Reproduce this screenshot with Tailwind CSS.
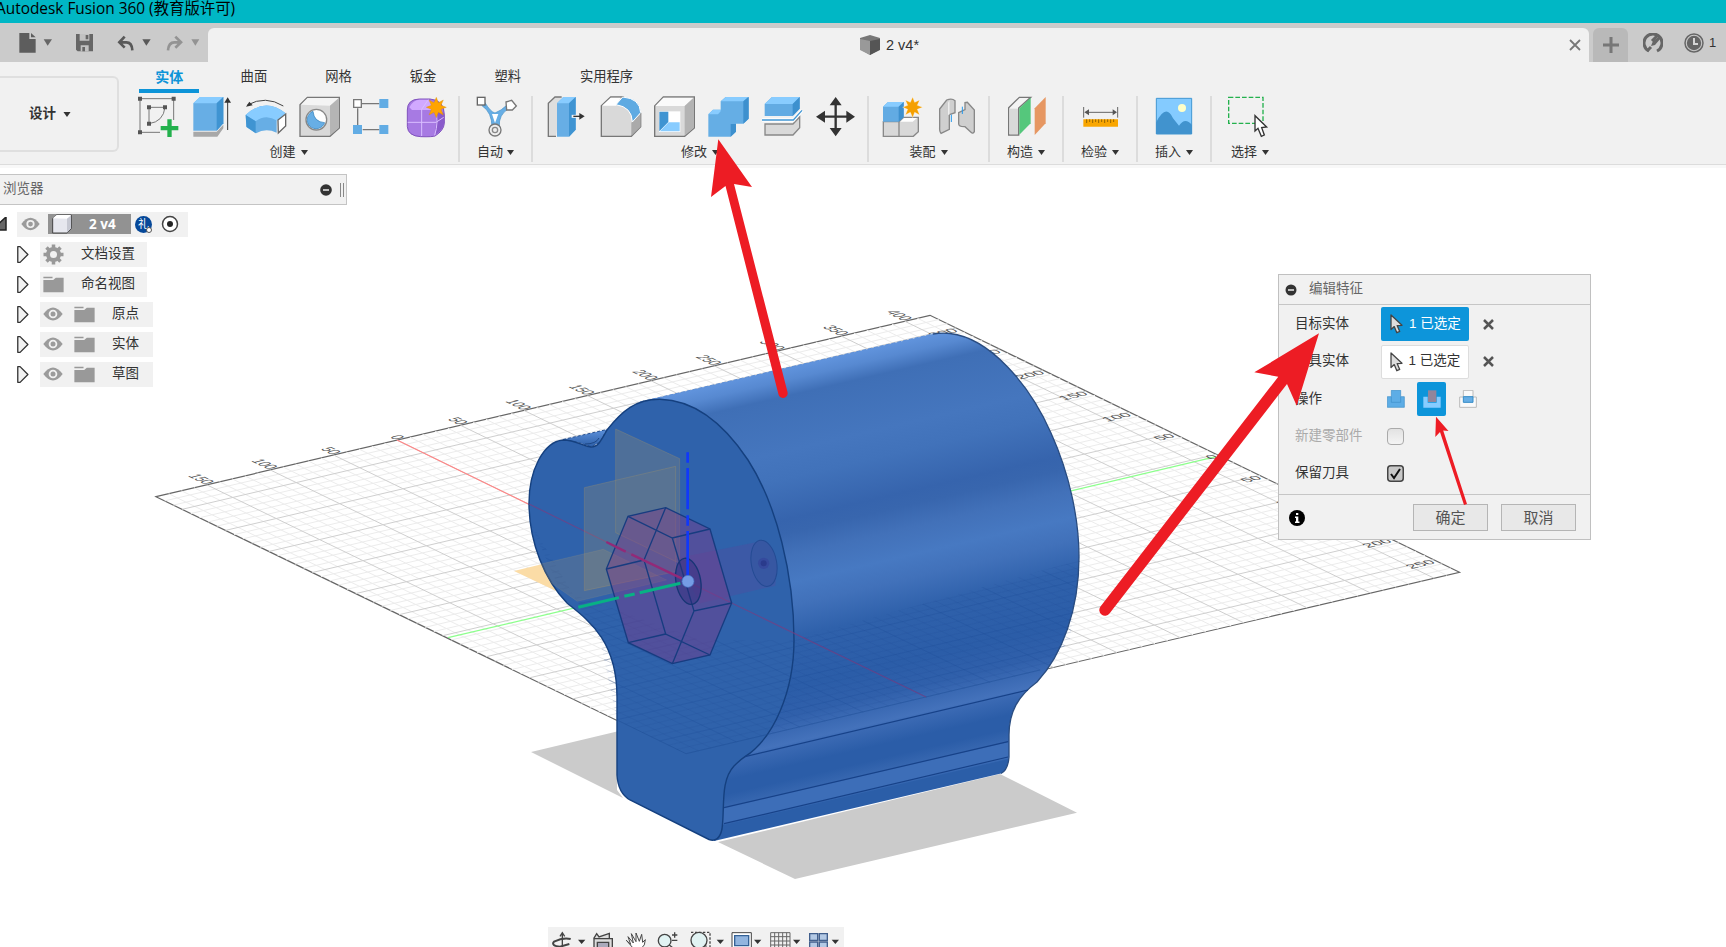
<!DOCTYPE html>
<html lang="zh-CN">
<head>
<meta charset="utf-8">
<title>Autodesk Fusion 360</title>
<script src="https://cdn.jsdelivr.net/npm/@tailwindcss/browser@4"></script>
</head>
<body class="relative flex h-[947px] w-[1726px] flex-col overflow-hidden bg-white font-['Liberation_Sans','Noto_Sans_CJK_SC',sans-serif] text-[#333]">

<svg class="hidden">
  <defs>
    <symbol id="eye" viewBox="0 0 60 42"><path d="M1 21Q30-18 59 21Q30 60 1 21Z" fill="#9b9b9b"/><circle cx="30" cy="21" r="13" fill="#f1f1f1"/><circle cx="30" cy="21" r="7.500" fill="#9b9b9b"/></symbol>
    <symbol id="folder" viewBox="0 0 62 52"><path d="M0 2H28V7H0Z M0 12H30L38 5H62V50H0Z" fill="#999"/></symbol>
    <symbol id="tri" viewBox="0 0 36 52"><path d="M2 2H9L33 26L9 50H2Z" fill="#f2f2f2" stroke="#333" stroke-width="4" stroke-linejoin="round"/></symbol>
    <symbol id="cursor" viewBox="0 0 40 62"><path d="M3 3V48L13 39L21 58L30 54L22 36L37 35Z" fill="#ddd" stroke="#444" stroke-width="4" stroke-linejoin="round"/></symbol>
    <symbol id="caret" viewBox="0 0 20 14"><path d="M0 0H20L10 14Z" fill="#333"/></symbol>
  </defs>
</svg>

<!-- Window title -->
<div class="flex h-[23px] shrink-0 items-center bg-[#00b7c5] pb-[5px] font-['Open_Sans','Noto_Sans_CJK_SC',sans-serif] text-[15.4px] leading-[18px] text-black"><span class="-ml-[4px] whitespace-nowrap">Autodesk Fusion 360 (教育版许可)</span></div>

<!-- Quick access and document tab -->
<div class="flex h-[39px] shrink-0 bg-[#cbcbcb]">
  <div class="flex w-[208px]">
    <svg class="h-[39px] w-[62px]" viewBox="0 69 186 117"><path d="M58 99H88V117H107V158H58Z M93 99L107 112H93Z" fill="#5d5d5d"/><path d="M131 118H156L143 137Z" fill="#666"/></svg>
    <svg class="h-[39px] w-[44px]" viewBox="186 69 132 117"><path d="M228 102H279V154H233L228 149Z" fill="#666"/><path d="M239 102H268V122H239Z M242 136H266V154H242Z" fill="#c2c2c2"/><path d="M257 105H265V118H257Z M247 141H255V154H247Z" fill="#666"/></svg>
    <svg class="h-[39px] w-[52px]" viewBox="318 69 156 117"><path d="M374 110L358 127L374 143 M360 127H379Q396 127 397 151" fill="none" stroke="#595959" stroke-width="8"/><path d="M427 118H452L439 137Z" fill="#595959"/></svg>
    <svg class="h-[39px] w-[50px]" viewBox="474 69 150 117"><path d="M526 110L543 127L526 143 M541 127H523Q506 127 504 151" fill="none" stroke="#939393" stroke-width="8"/><path d="M574 118H598L586 137Z" fill="#939393"/></svg>
  </div>
  <div class="mt-[5px] flex flex-1 items-center rounded-t-md bg-[#f1f1f1]">
    <div class="flex flex-1 items-center justify-center gap-[6px] pl-[2px] text-[14.5px]">
      <svg class="h-5 w-5" viewBox="0 0 20 20"><path d="M0 3L10 0L20 3V14L10 20L0 14Z" fill="#777"/><path d="M0 4L10 6V20L0 15Z" fill="#999"/><path d="M10 6L20 4V15L10 20Z" fill="#555"/></svg><span class="pt-[1px]">2 v4*</span>
    </div>
    <svg class="mr-[8px] h-[12px] w-[12px]" viewBox="0 0 12 12"><path d="M1 1L11 11M11 1L1 11" stroke="#777" stroke-width="1.800"/></svg>
  </div>
  <div class="mt-[5px] ml-[4px] flex w-[35px] items-center justify-center rounded-t-md bg-[#b9b9b9]"><svg class="h-4 w-4" viewBox="0 0 16 16"><path d="M8 0V16M0 8H16" stroke="#777" stroke-width="3"/></svg></div>
  <div class="flex w-[98px] items-center pl-[15px]">
    <svg class="h-5 w-5" viewBox="0 0 20 20"><path d="M6 18A9 9 0 1 1 14 18" fill="none" stroke="#666" stroke-width="3"/><path d="M17 3L10 8L8 13L12 12L18 5Z" fill="#666"/><path d="M4 18L8 14M15 2L9 8" stroke="#666" stroke-width="3"/></svg>
    <svg class="ml-[21px] h-5 w-5" viewBox="0 0 20 20"><circle cx="10" cy="10" r="9" fill="none" stroke="#666" stroke-width="1.500"/><circle cx="10" cy="10" r="7.200" fill="#666"/><path d="M10 5V11H14" stroke="#d5d5d5" stroke-width="2" fill="none"/></svg>
    <span class="ml-[5px] text-[13px]">1</span>
  </div>
</div>

<!-- Ribbon -->
<div class="flex h-[106px] shrink-0 border-b-[3px] border-[#f8f8f8] bg-[#f1f1f1] shadow-[inset_0_-1px_0_#dcdcdc]">
  <div class="mt-[14px] flex h-[76px] w-[119px] items-center gap-[7px] rounded-r-md border-2 border-l-0 border-[#dfdfdf] pl-[29px] text-[13.5px] font-bold">设计<svg class="h-[5px] w-[8px]"><use href="#caret"/></svg></div>
  <div class="flex flex-col">
    <div class="flex h-[34px] items-end pl-[8px] text-[13.3px]">
      <div class="flex h-[29px] w-[84.6px] justify-center font-bold text-[#0d94d8]"><span class="flex h-[26px] w-[60px] justify-center border-b-4 border-[#0d94d8] text-[14px]">实体</span></div>
      <div class="h-[29px] w-[84.6px] text-center">曲面</div>
      <div class="h-[29px] w-[84.6px] text-center">网格</div>
      <div class="h-[29px] w-[84.6px] text-center">钣金</div>
      <div class="h-[29px] w-[84.6px] text-center">塑料</div>
      <div class="h-[29px] w-[113px] text-center">实用程序</div>
    </div>
    <div class="flex h-[66px] text-[13px]">
      <div class="flex w-[341px] flex-col border-r-2 border-[#dcdcdc]">
        <div class="-mt-[1px] flex pl-[11px]">
          <svg class="h-[44px] w-[54px]" viewBox="390 285 162 132"><path d="M420 296H521V360M420 296V397H480" fill="none" stroke="#777" stroke-width="3"/><path d="M447 371V322H495Q490 365 447 371" fill="none" stroke="#777" stroke-width="3"/><path d="M414 290h12v12h-12zM515 290h12v12h-12zM414 391h12v12h-12zM441 316h12v12h-12zM489 316h12v12h-12zM441 365h12v12h-12z" fill="#555"/><path d="M502 358H515V378H535V391H515V411H502V391H482V378H502Z" fill="#23b14d"/></svg>
          <svg class="h-[44px] w-[54px]" viewBox="552 285 162 132"><path d="M580 395L650 395L670 374V385L652 410H580Z" fill="#a8a8a8"/><path d="M580 310L600 291H670V370L650 392H580Z" fill="#67aee5"/><path d="M580 310L600 291H670L650 310Z" fill="#88ccff"/><path d="M650 310L670 291V370L650 392Z" fill="#3f94d2"/><path d="M683 390V300" stroke="#333" stroke-width="3"/><path d="M673 308L683 292L693 308Z" fill="#333"/></svg>
          <svg class="h-[44px] w-[54px]" viewBox="714 285 162 132"><path d="M737 345Q797 290 857 340L830 360V398Q797 383 768 400L740 382Z" fill="#67aee5"/><path d="M737 345Q797 290 857 340L832 362Q797 340 767 364Z" fill="#88ccff"/><path d="M737 345L767 364V400L739 380Z" fill="#3f94d2"/><path d="M834 360L857 342V378L835 399Z" fill="#fff" stroke="#666" stroke-width="4"/><path d="M742 315Q797 285 850 318" fill="none" stroke="#444" stroke-width="3"/><path d="M738 320L748 305L758 316Z" fill="#333"/></svg>
          <svg class="h-[44px] w-[54px]" viewBox="876 285 162 132"><path d="M900 314L922 292H1018V384L990 409H900Z" fill="#d9d9d9" stroke="#777" stroke-width="4"/><path d="M903 314L923 294H1016L990 317Z" fill="#f4f4f4"/><path d="M990 317L1016 295V384L990 406Z" fill="#b5b5b5"/><circle cx="949" cy="359" r="31" fill="#fff" stroke="#888" stroke-width="4"/><path d="M939 334A27 27 0 1 0 974 368Q942 366 939 334Z" fill="#67aee5" stroke="#2d7bb5" stroke-width="2"/></svg>
          <svg class="h-[44px] w-[54px]" viewBox="1038 285 162 132"><path d="M1086 311H1138M1073 325V376M1088 389H1138" stroke="#777" stroke-width="4"/><path d="M1061 299h23v23h-23z" fill="#fff" stroke="#777" stroke-width="4"/><path d="M1138 297h27v27h-27zM1059 375h27v27h-27zM1138 375h27v27h-27z" fill="#62ace4"/></svg>
          <svg class="h-[44px] w-[54px]" viewBox="1200 285 162 132"><path d="M1222 330Q1222 298 1258 297H1290Q1333 300 1333 345V370Q1331 392 1305 408Q1298 411 1262 410Q1224 408 1222 380Z" fill="#a77ae3" stroke="#8052bd" stroke-width="3"/><path d="M1310 330L1332 340V370Q1330 390 1306 404Z" fill="#8a5bcb"/><path d="M1228 322Q1240 298 1260 299H1286L1306 325L1300 330H1236Z" fill="#d1a9ff"/><path d="M1223 367H1308L1331 352M1265 328V408M1306 328Q1317 365 1304 406M1265 328L1285 299" stroke="#dabfff" stroke-width="3" fill="none"/><path d="M1309 292L1315 308L1330 300L1323 316L1339 322L1323 328L1330 345L1315 337L1309 353L1302 337L1287 345L1294 328L1279 322L1294 316L1287 300L1302 308Z" fill="#ffa400" stroke="#d98900" stroke-width="1"/></svg>
        </div>
        <div class="flex h-[23px] items-center justify-center gap-[5px] pt-[3px]">创建<svg class="h-[5px] w-[7px]"><use href="#caret"/></svg></div>
      </div>
      <div class="flex w-[73px] flex-col border-r-2 border-[#dcdcdc]">
        <div class="-mt-[1px] flex pl-[9px]"><svg class="h-[44px] w-[54px]" viewBox="57 105 162 132"><path d="M105 128Q122 156 135 159Q155 151 170 136L177 145Q145 164 148 200L126 202Q126 157 96 137Z" fill="#67aee5" stroke="#468fc5" stroke-width="2"/><path d="M126 162H145L135 189Z" fill="#fff"/><rect x="82" y="112" width="23" height="23" fill="#fff" stroke="#666" stroke-width="4"/><path d="M168 126L185 121L199 138L187 150H170Z" fill="#fff" stroke="#777" stroke-width="4"/><circle cx="135" cy="210" r="18" fill="#eee" stroke="#777" stroke-width="4"/><circle cx="135" cy="210" r="8" fill="none" stroke="#888" stroke-width="4"/></svg></div>
        <div class="flex h-[23px] items-center justify-center gap-[4px] pt-[3px]">自动<svg class="h-[5px] w-[7px]"><use href="#caret"/></svg></div>
      </div>
      <div class="flex w-[336px] flex-col border-r-2 border-[#dcdcdc]">
        <div class="-mt-[1px] flex pl-[7px]">
          <svg class="h-[44px] w-[54px]" viewBox="270 105 162 132"><path d="M318 229H295V130L315 111H335" fill="#dedede" stroke="#777" stroke-width="4"/><path d="M321 130L340 111H377V209L357 230H321Z" fill="#67aee5"/><path d="M321 130L340 111H377L357 130Z" fill="#88ccff"/><path d="M357 130L377 111V209L357 230Z" fill="#3f94d2"/><path d="M365 169H392" stroke="#f5f5f5" stroke-width="9"/><path d="M370 169H392" stroke="#333" stroke-width="4"/><path d="M388 159L404 169L388 179Z" fill="#333"/></svg>
          <svg class="h-[44px] w-[54px]" viewBox="432 105 162 132"><path d="M454 229V137L482 111H520L572 160V200L544 229Z" fill="#d9d9d9" stroke="#777" stroke-width="4"/><path d="M456 137L482 113H512L498 137Z" fill="#fff"/><path d="M544 188L572 161V200L544 227Z" fill="#aaa"/><path d="M498 134L518 111Q570 115 572 158L547 186Q546 141 498 134Z" fill="#5eaae2" stroke="#fff" stroke-width="3"/></svg>
          <svg class="h-[44px] w-[54px]" viewBox="594 105 162 132"><path d="M614 138L640 111H733V204L704 229H614Z" fill="#d9d9d9" stroke="#777" stroke-width="4"/><path d="M616 138L640 113H731L704 138Z" fill="#fafafa"/><path d="M704 138L731 113V204L704 227Z" fill="#b3b3b3"/><path d="M627 154H691V216H627Z" fill="#fff"/><path d="M628 155L655 155V186L628 214Z" fill="#3f94d2"/><path d="M656 187H689V214H630Z" fill="#88ccff"/></svg>
          <svg class="h-[44px] w-[54px]" viewBox="756 105 162 132"><path d="M775 163L789 149H812V124L827 111H896V176L880 191H858V215L842 230H775Z" fill="#65aee5"/><path d="M775 163L789 149H812V154L804 163Z M813 124L827 111H894L880 124Z" fill="#88ccff"/><path d="M880 124L896 111V176L880 191Z M842 192H858V215L842 230Z" fill="#3d90ce"/></svg>
          <svg class="h-[44px] w-[54px]" viewBox="918 105 162 132"><path d="M944 132L966 111H1049V146L1028 168H944Z" fill="#62abe3"/><path d="M944 132L966 111H1049L1028 132Z" fill="#88ccff"/><path d="M1028 132L1049 111V146L1028 168Z" fill="#3d90ce"/><path d="M945 192H1029L1049 171V203L1029 225H945Z" fill="#d9d9d9" stroke="#888" stroke-width="4"/><path d="M936 180H1030L1056 151" fill="none" stroke="#fff" stroke-width="10"/><path d="M936 180H1030L1056 151" fill="none" stroke="#4297d4" stroke-width="4"/></svg>
          <svg class="h-[44px] w-[54px]" viewBox="1080 105 162 132"><path d="M1157 130V210M1118 170H1196" stroke="#333" stroke-width="7"/><path d="M1157 111L1175 136H1139ZM1157 229L1175 204H1139ZM1098 170L1125 152V188ZM1215 170L1189 152V188Z" fill="#333"/></svg>
        </div>
        <div class="flex h-[23px] items-center justify-center gap-[5px] pt-[3px]">修改<svg class="h-[5px] w-[7px]"><use href="#caret"/></svg></div>
      </div>
      <div class="flex w-[121px] flex-col border-r-2 border-[#dcdcdc]">
        <div class="-mt-[1px] flex pl-[7px]">
          <svg class="h-[44px] w-[54px]" viewBox="18 105 162 132"><path d="M40 185H87L100 172H145V215L130 229H40Z" fill="#d8d8d8" stroke="#888" stroke-width="4"/><path d="M87 185V229" stroke="#888" stroke-width="4"/><path d="M91 185L103 174H141L128 185Z" fill="#fff"/><path d="M39 140L54 126H101V172L86 185H39Z" fill="#62abe3"/><path d="M39 140L54 126H101L86 140Z" fill="#88ccff"/><path d="M86 140L101 126V172L86 185Z" fill="#3d90ce"/><path d="M128 111L134 127L149 120L142 136L158 142L142 148L149 165L134 157L128 173L121 157L106 165L113 148L98 142L113 136L106 120L121 127Z" fill="#f5a000" stroke="#fff" stroke-width="1"/></svg>
          <svg class="h-[44px] w-[54px]" viewBox="180 105 162 132"><path d="M209 147L230 120Q246 114 255 122V158L238 164V208L213 220Q208 215 209 200Z" fill="#cfcfcf" stroke="#888" stroke-width="4"/><path d="M235 128L238 120V164L235 165Z" fill="#fff"/><path d="M266 158L285 149V128L292 127L313 150V215Q309 223 303 217L285 200Q267 201 266 192Z" fill="#cfcfcf" stroke="#888" stroke-width="4"/><path d="M244 164V186M277 140V162" stroke="#2598ec" stroke-width="3"/></svg>
        </div>
        <div class="flex h-[23px] items-center justify-center gap-[5px] pt-[3px]">装配<svg class="h-[5px] w-[7px]"><use href="#caret"/></svg></div>
      </div>
      <div class="flex w-[74px] flex-col border-r-2 border-[#dcdcdc]">
        <div class="-mt-[1px] flex pl-[9px]"><svg class="h-[44px] w-[54px]" viewBox="387 105 162 132"><path d="M416 143L448 112H482L446 144V225H416Z" fill="#f4f4f4" stroke="#777" stroke-width="4"/><path d="M418 146H444V223H418Z" fill="#d9d9d9"/><path d="M448 145L482 113V190L448 224Z" fill="#55c77c"/><path d="M494 145L527 111V190L494 225Z" fill="#e69762"/></svg></div>
        <div class="flex h-[23px] items-center justify-center gap-[5px] pt-[3px]">构造<svg class="h-[5px] w-[7px]"><use href="#caret"/></svg></div>
      </div>
      <div class="flex w-[74px] flex-col border-r-2 border-[#dcdcdc]">
        <div class="-mt-[1px] flex pl-[9px]"><svg class="h-[44px] w-[54px]" viewBox="609 105 162 132"><path d="M641 141V173M743 141V173M650 157H735" stroke="#666" stroke-width="3"/><path d="M643 157L657 148V166ZM741 157L728 148V166Z" fill="#555"/><path d="M640 178H744V200H640Z" fill="#f9a600"/><path d="M650 178V189M659 178V186M668 178V189M677 178V186M686 178V189M695 178V186M704 178V189M713 178V186M722 178V189M731 178V186" stroke="#956400" stroke-width="3"/></svg></div>
        <div class="flex h-[23px] items-center justify-center gap-[5px] pt-[3px]">检验<svg class="h-[5px] w-[7px]"><use href="#caret"/></svg></div>
      </div>
      <div class="flex w-[74px] flex-col border-r-2 border-[#dcdcdc]">
        <div class="-mt-[1px] flex pl-[9px]"><svg class="h-[44px] w-[54px]" viewBox="831 105 162 132"><path d="M859 115H965V222H859Z" fill="#84cbff" stroke="#4197d2" stroke-width="3"/><circle cx="936" cy="144" r="12" fill="#ffffc9"/><path d="M858 188Q888 129 909 175L927 197Q945 170 966 195V222H858Z" fill="#4193ce"/></svg></div>
        <div class="flex h-[23px] items-center justify-center gap-[5px] pt-[3px]">插入<svg class="h-[5px] w-[7px]"><use href="#caret"/></svg></div>
      </div>
      <div class="flex w-[76px] flex-col">
        <div class="-mt-[1px] flex pl-[8px]"><svg class="h-[44px] w-[54px]" viewBox="1050 105 162 132"><path d="M1076 112H1179V190H1076Z" fill="none" stroke="#23b14d" stroke-width="4" stroke-dasharray="14 6"/><path d="M1155 167V213L1164 205L1174 229L1183 225L1175 203L1190 201Z" fill="#fff" stroke="#333" stroke-width="4"/></svg></div>
        <div class="flex h-[23px] items-center justify-center gap-[5px] pt-[3px]">选择<svg class="h-[5px] w-[7px]"><use href="#caret"/></svg></div>
      </div>
    </div>
  </div>
</div>

<!-- Modelling viewport -->
<main class="relative min-h-0 flex-1">
  <svg class="absolute inset-0 h-[779px] w-[1726px]" viewBox="0 168 1726 779">
    <defs>
      <linearGradient id="side" gradientUnits="userSpaceOnUse" x1="660" y1="398" x2="760.500" y2="832">
        <stop offset="0" stop-color="#6093dc"/><stop offset=".025" stop-color="#5789d1"/><stop offset=".06" stop-color="#3f6fb6"/><stop offset=".18" stop-color="#4576be"/><stop offset=".24" stop-color="#4172ba"/><stop offset=".33" stop-color="#3664ad"/><stop offset=".36" stop-color="#3866ae"/><stop offset=".41" stop-color="#4271b9"/><stop offset=".47" stop-color="#4779c2"/><stop offset=".52" stop-color="#4171ba"/><stop offset=".59" stop-color="#2f61ab"/><stop offset=".7" stop-color="#2b5da8"/><stop offset=".76" stop-color="#3060ab"/><stop offset=".82" stop-color="#4472bb"/><stop offset=".83" stop-color="#3a69b3"/><stop offset=".87" stop-color="#2b5da8"/><stop offset=".9" stop-color="#2b5da8"/><stop offset=".928" stop-color="#3767b0"/><stop offset=".93" stop-color="#3d6eb8"/><stop offset=".963" stop-color="#3d6eb8"/><stop offset=".967" stop-color="#2b5ea8"/><stop offset="1" stop-color="#2b5ea8"/>
      </linearGradient>
      <linearGradient id="bump" x1="0" y1="0" x2="0" y2="1"><stop offset="0" stop-color="#5d91db"/><stop offset="1" stop-color="#2d5fa8"/></linearGradient>
      <clipPath id="low"><path d="M529 520L560 590L700 640L794 640L1080 560L1070 640L1030 687L745 757L690 757L617 720L600 640Z"/></clipPath>
    </defs>
    <path d="M156 496.700L930 315.300L1459.500 572.300L685.500 753.700Z" fill="#fff" stroke="#666" stroke-width="1.200"/>
    <path id="minor" fill="none" stroke="#ececec" stroke-width="1"/>
    <path id="major" fill="none" stroke="#cfcfcf" stroke-width="1"/>
    <path d="M397 440L684 580" stroke="#ff8585" stroke-width="1.200"/>
    <path d="M448 637.700L1216 456.700" stroke="#8dff8d" stroke-width="1.300"/>
    <g id="labels" class="font-['Liberation_Sans',sans-serif]" font-size="12" fill="#555"></g>

    <path d="M531 752L617 731.500V790L623 798ZM718 842L1000 774L1077 812.700L795 879Z" fill="#cbcbcb"/>
    <path d="M514 571L603 549.300L667 580L577 601Z" fill="#fbdca6"/>

    <path d="M563 439.500L607 429.500L600 442L591 447L580 443Z" fill="url(#bump)" stroke="#264f8f" stroke-width="1" stroke-dasharray="3 2"/>
    <path d="M648 400L933 334Q942 332.500 950 333.500C990 338 1030 385 1051 433C1070 475 1079 520 1079 557C1079 610 1062 655 1037 682C1018 696 1009 712 1009 735V757Q1008 770 1001 773.500L714 841Z" fill="url(#side)"/>
    <path d="M933 334Q942 332.500 950 333.500C990 338 1030 385 1051 433C1070 475 1079 520 1079 557C1079 610 1062 655 1037 682C1018 696 1009 712 1009 735V757Q1008 770 1001 773.500" fill="none" stroke="#294c80" stroke-width="1.300"/>
    <path d="M640 402L933 334" stroke="#5b8ed8" stroke-width="1" stroke-dasharray="4 2"/>
    <path d="M660 399.300C636 399 622 411 607 430C601 441 598 447 591 447C581 446 577 440 563 440C543 442 529 471 529 503C529 543 545 580 567 603C588 620 617 640 617 697V775Q618 793 630 800L709 839.500Q719 843 722 829C725 808 720 781 734 766Q740 760 745 756.700C774 738 794 691 794 640C794 575 777 505 748 460C718 415 688 400 660 399.300Z" fill="#2f62ab" stroke="#15407f" stroke-width="1.400"/>
    <path d="M585 444Q596 444 599 438" fill="none" stroke="#1d4887" stroke-width="1"/>
    <path d="M745 756.700L1028 690M724 807.700L1008 741.700M724 823.700L1008 757" stroke="#174289" stroke-width="1.200"/>

    <g clip-path="url(#low)">
      <path id="minorLow" fill="none" stroke="#1d4d96" stroke-opacity=".12" stroke-width="1"/>
      <path id="majorLow" fill="none" stroke="#1d4d96" stroke-opacity=".28" stroke-width="1"/>
    </g>
    <path d="M617 720L686 753.700L1040 670" fill="none" stroke="#1d4d96" stroke-opacity=".5"/>
    <path d="M529 504L684 580L926 697" fill="none" stroke="#7c3c80" stroke-opacity=".65" stroke-width="1.200"/>

    <!-- Origin planes, tool body and axes -->
    <g transform="translate(500 380) scale(.33333)">
      <path d="M123 552L310 508L500 600L232 664L155 610Z" fill="#c9a35d" fill-opacity=".18" stroke="#a79c79" stroke-opacity=".25" stroke-width="2"/>
      <path d="M347 147L539 236V550L347 458ZM253 323L527 259V575L253 632Z" fill="#b39a62" fill-opacity=".24" stroke="#b39a62" stroke-opacity=".28" stroke-width="3"/>
      <path d="M347 302L527 259V545L347 458Z" fill="#b39a62" fill-opacity=".1"/>
      <path d="M530 535L790 482Q835 530 826 617L600 670Z" fill="#6c3b94" fill-opacity=".22"/>
      <path d="M497 383L630 447L695 669L630 825L517 851L385 788L319 567L384 409Z" fill="#7e3989" fill-opacity=".44" stroke="#173c80" stroke-width="4"/>
      <path d="M384 409L517 474L630 447M497 383L432 540L497 762L630 825M319 567L432 540M385 788L497 762M517 474L582 693L695 669M582 693L517 851" fill="none" stroke="#173c80" stroke-width="4"/>
      <ellipse cx="565" cy="604" rx="37" ry="70" transform="rotate(-10 565 604)" fill="#2c2879" fill-opacity=".4" stroke="#173575" stroke-width="4"/>
      <ellipse cx="792" cy="550" rx="38" ry="70" transform="rotate(-10 792 550)" fill="#3757a2" stroke="#244b93" stroke-width="3"/>
      <circle cx="791" cy="550" r="17" fill="#354a9d"/><circle cx="791" cy="550" r="9" fill="#2a3b8c"/>
      <path d="M319 486L377 515M394 523L545 595" stroke="#922a78" stroke-width="7"/>
      <path d="M541 610L419 638M404 642L373 649M357 653L235 682" stroke="#08b184" stroke-width="9"/>
      <path d="M563 217V248M563 264V388M563 406V437M563 453V590" stroke="#1038fa" stroke-width="8"/>
      <circle cx="564" cy="604" r="18" fill="#759ce5" stroke="#4772c3" stroke-width="2"/>
    </g>
  </svg>

  <!-- Browser panel -->
  <section class="relative flex flex-col items-start pt-[6px]">
    <header class="flex h-[31px] w-[347px] items-center border-[1.5px] border-l-0 border-[#c4c4c4] bg-[#f1f1f1] pl-[3px] text-[13.5px] text-[#666]">浏览器
      <svg class="ml-auto h-[12px] w-[12px]" viewBox="0 0 12 12"><circle cx="6" cy="6" r="5.800" fill="#333"/><path d="M3 6H9" stroke="#eee" stroke-width="1.500"/></svg>
      <span class="mr-[2px] ml-[8px] h-[14px] w-[4px] border-x border-[#888]"></span>
    </header>
    <div class="mt-[6.5px] flex h-[25px] items-center">
      <svg class="h-[15px] w-[17px]" viewBox="0 0 17 15"><path d="M6 0V13H-8Z" fill="#666" stroke="#222" stroke-width="1.500"/></svg>
      <div class="flex h-[25px] w-[171px] items-center bg-[#f1f1f1] pl-[4px]">
        <svg class="h-[14px] w-[19px]"><use href="#eye"/></svg>
        <div class="ml-[8px] flex h-[20px] w-[83px] items-center bg-[#929292] font-['Open_Sans',sans-serif] text-[13.5px] font-bold text-white"><svg class="ml-[3px] h-[20px] w-[22px]" viewBox="0 0 66 60"><path d="M5 13L17 3H61V44L48 57H5Z" fill="#e6e7ee" stroke="#444" stroke-width="3"/><path d="M5 13L17 3H61L48 14Z" fill="#fff"/><path d="M48 14L60 5V43L48 56Z" fill="#c6c8d2"/></svg><span class="ml-[16px]">2 v4</span></div>
        <div class="relative ml-[4px] flex h-[17px] w-[17px] items-center justify-center rounded-full bg-[#064899] text-[11px] text-white">礼<span class="absolute right-0 bottom-0 h-[6px] w-[6px] rounded-sm border border-[#555] bg-white"></span></div>
        <svg class="ml-[9px] h-[18px] w-[18px]" viewBox="0 0 18 18"><circle cx="9" cy="9" r="7.500" fill="#fff" stroke="#444" stroke-width="1.500"/><circle cx="9" cy="9" r="3" fill="#222"/></svg>
      </div>
    </div>
    <div class="mt-[5px] flex flex-col gap-[5px] pl-[17px] text-[13.500px]">
      <div class="flex h-[25px] items-center gap-[11px]"><svg class="h-[17px] w-[12px]"><use href="#tri"/></svg><div class="flex h-[25px] w-[107px] items-center bg-[#f1f1f1] pl-[3px]"><svg class="h-[21px] w-[21px]" viewBox="-10.500 -10.500 21 21"><circle r="5.500" fill="none" stroke="#999" stroke-width="4"/><path d="M0-10V-6M0 10V6M-10 0H-6M10 0H6M-7-7L-4.500-4.500M7 7L4.500 4.500M7-7L4.500-4.500M-7 7L-4.500 4.500" stroke="#999" stroke-width="3.500"/></svg><span class="ml-[17px] pt-[1px]">文档设置</span></div></div>
      <div class="flex h-[25px] items-center gap-[11px]"><svg class="h-[17px] w-[12px]"><use href="#tri"/></svg><div class="flex h-[25px] w-[107px] items-center bg-[#f1f1f1] pl-[3px]"><svg class="h-[17px] w-[21px]"><use href="#folder"/></svg><span class="ml-[17px] pt-[1px]">命名视图</span></div></div>
      <div class="flex h-[25px] items-center gap-[11px]"><svg class="h-[17px] w-[12px]"><use href="#tri"/></svg><div class="flex h-[25px] w-[113px] items-center bg-[#f1f1f1] pl-[3px]"><svg class="h-[14px] w-[20px]"><use href="#eye"/></svg><svg class="ml-[11px] h-[17px] w-[21px]"><use href="#folder"/></svg><span class="ml-[17px] pt-[1px]">原点</span></div></div>
      <div class="flex h-[25px] items-center gap-[11px]"><svg class="h-[17px] w-[12px]"><use href="#tri"/></svg><div class="flex h-[25px] w-[113px] items-center bg-[#f1f1f1] pl-[3px]"><svg class="h-[14px] w-[20px]"><use href="#eye"/></svg><svg class="ml-[11px] h-[17px] w-[21px]"><use href="#folder"/></svg><span class="ml-[17px] pt-[1px]">实体</span></div></div>
      <div class="flex h-[25px] items-center gap-[11px]"><svg class="h-[17px] w-[12px]"><use href="#tri"/></svg><div class="flex h-[25px] w-[113px] items-center bg-[#f1f1f1] pl-[3px]"><svg class="h-[14px] w-[20px]"><use href="#eye"/></svg><svg class="ml-[11px] h-[17px] w-[21px]"><use href="#folder"/></svg><span class="ml-[17px] pt-[1px]">草图</span></div></div>
    </div>
  </section>

  <!-- Edit feature dialog -->
  <section class="absolute top-[106px] left-[1278px] flex h-[266px] w-[313px] flex-col border border-[#c0c0c0] bg-[#f1f1f1] text-[13.500px]">
    <header class="flex h-[30px] items-center gap-[12px] border-b border-[#c6c6c6] pl-[6px] text-[#666]"><svg class="h-[12px] w-[12px]" viewBox="0 0 12 12"><circle cx="6" cy="6" r="5.500" fill="#333"/><path d="M3 6H9" stroke="#eee" stroke-width="1.500"/></svg>编辑特征</header>
    <div class="flex h-[189px] flex-col pl-[16px]">
      <div class="flex h-[38px] items-center"><span class="w-[86px]">目标实体</span><div class="flex h-[34px] w-[88px] items-center gap-[6px] rounded-xs bg-[#0d95da] pl-[9px] text-white"><svg class="h-[20px] w-[13px]"><use href="#cursor"/></svg><span>1 已选定</span></div><svg class="ml-[14px] h-[11px] w-[11px]" viewBox="0 0 11 11"><path d="M1 1L10 10M10 1L1 10" stroke="#555" stroke-width="2.500"/></svg></div>
      <div class="flex h-[37px] items-center"><span class="w-[86px]">刀具实体</span><div class="flex h-[34px] w-[88px] items-center gap-[6px] rounded-xs border-[1.500px] border-[#ddd] bg-white pl-[7.500px]"><svg class="h-[20px] w-[13px]"><use href="#cursor"/></svg><span>1 已选定</span></div><svg class="ml-[14px] h-[11px] w-[11px]" viewBox="0 0 11 11"><path d="M1 1L10 10M10 1L1 10" stroke="#555" stroke-width="2.500"/></svg></div>
      <div class="flex h-[38px] items-center"><span class="w-[92px]">操作</span>
        <svg class="h-[18px] w-[18px]" viewBox="0 0 54 54"><path d="M13 1H41V20H52V52H1V20H13Z" fill="#5dade6" stroke="#3c8ec9" stroke-width="2"/><path d="M13 20V37H41V20" fill="none" stroke="#3c8ec9" stroke-width="2"/></svg>
        <div class="ml-[12px] flex h-[34px] w-[29px] items-center justify-center rounded-xs bg-[#0d95da]"><svg class="h-[18px] w-[18px]" viewBox="0 0 54 54"><path d="M1 20H14V38H41V20H53V53H1Z" fill="#86ccff"/><path d="M15 1H40V36H15Z" fill="#92859b"/></svg></div>
        <svg class="ml-[13px] h-[18px] w-[18px]" viewBox="0 0 54 54"><path d="M13 1H42V21H52V52H2V21H13Z" fill="#fafafa" stroke="#bbb" stroke-width="3"/><path d="M13 20H42V37H13Z" fill="#67aee5" stroke="#358cc7" stroke-width="3"/></svg>
      </div>
      <div class="flex h-[37px] items-center text-[#aaa]"><span class="w-[92px]">新建零部件</span><span class="h-[17px] w-[17px] rounded border border-[#aaa] bg-gradient-to-b from-[#e2e2e2] to-[#f4f4f4]"></span></div>
      <div class="flex h-[37px] items-center"><span class="w-[92px]">保留刀具</span><svg class="h-[17px] w-[17px]" viewBox="0 0 17 17"><rect x=".75" y=".75" width="15.500" height="15.500" rx="3" fill="#c8c8c8" stroke="#444" stroke-width="1.500"/><path d="M4 9L7 13L13 4" fill="none" stroke="#111" stroke-width="2"/></svg></div>
    </div>
    <footer class="flex flex-1 items-center border-t border-[#c6c6c6] pt-[1px] pl-[10px] text-[15px] text-[#555]"><svg class="h-[16px] w-[16px]" viewBox="0 0 16 16"><circle cx="8" cy="8" r="8" fill="#000"/><path d="M6 6.500H9.300V11.500H10.500V13H6V11.500H7V8H6ZM7 3H9.300V5H7Z" fill="#fff"/></svg>
      <button class="ml-[108px] h-[27px] w-[75px] border border-[#b5b5b5] bg-[#e8e8e8] pt-[1px]">确定</button><button class="ml-[13px] h-[27px] w-[75px] border border-[#b5b5b5] bg-[#e8e8e8] pt-[1px]">取消</button></footer>
  </section>

  <!-- Navigation bar -->
  <nav class="absolute top-[759px] left-[548px] h-[20px] w-[296px] overflow-hidden bg-[#f1f1f1]">
    <svg class="h-[20px] w-[296px]" viewBox="24 36 888 60">
      <g fill="none" stroke="#444" stroke-width="4"><path d="M67 98V57M60 64L67 53L74 64"/><path d="M92 72Q70 66 42 80Q32 92 60 95L88 87" stroke-width="6"/><path d="M161 71L170 56L177 66L208 55V69M162 71H217V98H162Z" fill="#ddd"/><path d="M172 82H206V98H172Z" fill="#aab"/><path d="M259 76L272 88L264 65L280 84L274 56L288 80L288 54L298 79L305 58L308 82L316 74Q316 92 304 100H280Z" stroke-width="3" fill="#fff"/><circle cx="374" cy="77" r="19" fill="#e1f3f3"/><path d="M387 89L399 99M396 60H412M404 52V68M396 76H412"/><circle cx="477" cy="76" r="24" fill="#e1f3f3"/><path d="M453 52H510V98M494 90L505 99" stroke-dasharray="7 5"/><path d="M576 53H634V98H576Z" stroke-width="3" fill="#fff"/><path d="M584 62H626V92H584Z" fill="#92b5df" stroke="#346297"/><path d="M692 53H750V100M692 53V100M704 53V98M716 53V98M728 53V98M740 53V98M692 65H750M692 78H750M692 90H750" stroke="#666" stroke-width="3"/><path d="M809 56H833V76H809ZM838 56H862V76H838ZM809 81H833V101H809ZM838 81H862V101H838Z" fill="#b3c9e5" stroke="#415f8d"/></g>
      <path d="M114 74H136L125 87ZM530 74H552L541 87ZM642 74H664L653 87ZM759 74H781L770 87ZM875 74H897L886 87Z" fill="#333"/>
    </svg>
  </nav>
</main>

<!-- Annotation arrows -->
<svg class="pointer-events-none absolute inset-0 h-[947px] w-[1726px]" viewBox="0 0 1726 947" fill="#ed1c24">
  <path d="M718.300 139.300L752 187L734 184L787.500 392A4.500 4.500 0 0 1 778.500 394.500L725.500 186L711 197Z"/>
  <path d="M1319 333.300L1296.700 405.700L1287 384L1109.500 613.500A5.700 5.700 0 0 1 1100.500 606.500L1278.300 376.700L1254.300 372.300Z"/>
  <path d="M1436 416.700L1448.500 431L1443.200 430.500L1467 504L1464 505L1440 432L1435.300 437Z"/>
</svg>

<script>
  // Ground grid: 61 x 61 cells of 10 units, projected obliquely.
  const point = (i, j) => [156 + 12.69 * i + 8.68 * j, 496.7 - 2.974 * i + 4.213 * j];
  let minor = '', major = '';
  const line = (a, b) => 'M' + a.join(' ') + 'L' + b.join(' ');
  for (let k = 1; k < 61; k++) {
    const along = line(point(k, 0), point(k, 61)), across = line(point(0, k), point(61, k));
    if ((k + 1) % 5 === 0) major += along; else minor += along;
    if ((k + 2) % 5 === 0) major += across; else minor += across;
  }
  for (const id of ['minor', 'minorLow']) document.getElementById(id).setAttribute('d', minor);
  for (const id of ['major', 'majorLow']) document.getElementById(id).setAttribute('d', major);
  let labels = '';
  for (let i = 4; i < 60; i += 5) {
    const [x, y] = point(i, 0);
    labels += `<text text-anchor="end" transform="matrix(.868 .421 -1.269 .297 ${x - 2} ${y - 0.5})">${Math.abs(i - 19) * 10}</text>`;
  }
  for (let j = 3; j < 61; j += 5) {
    const [x, y] = point(61, j);
    labels += `<text text-anchor="end" transform="matrix(1.269 -.297 .868 .421 ${x + 3} ${y + 3.5})">${Math.abs(j - 33) * 10}</text>`;
  }
  document.getElementById('labels').innerHTML = labels;
</script>
</body>
</html>
